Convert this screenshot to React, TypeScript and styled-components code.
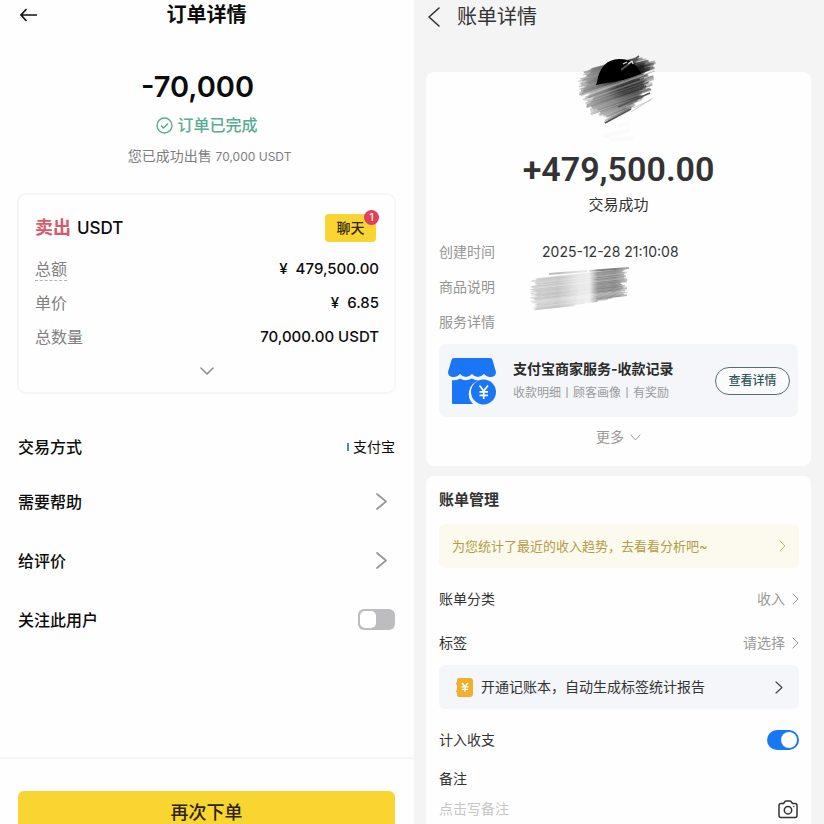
import React from 'react';
import styled, { createGlobalStyle, css } from 'styled-components';

const GlobalStyle = createGlobalStyle`
  *, *::before, *::after { box-sizing: border-box; }
  body {
    margin: 0;
    background: #f4f4f4;
    font-family: Inter, "Noto Sans CJK SC", sans-serif;
    -webkit-font-smoothing: antialiased;
  }
  button, input {
    font: inherit;
    color: inherit;
    margin: 0;
    padding: 0;
    border: 0;
    background: none;
  }
  button { cursor: pointer; }
  h1, h2, p, dl, dd, dt { margin: 0; font-weight: inherit; }
  svg { display: block; flex: none; }
`;

const Page = styled.div`
  display: grid;
  grid-template-columns: 101fr 100fr;
  height: 100vh;
  overflow: hidden;
`;

/* ---------- shared ---------- */

type Dir = 'left' | 'right' | 'down';

const chevronPoints = (dir: Dir, w: number, h: number) => {
  if (dir === 'left') return `${w - 1},1 1,${h / 2} ${w - 1},${h - 1}`;
  if (dir === 'right') return `1,1 ${w - 1},${h / 2} 1,${h - 1}`;
  return `1,1 ${w / 2},${h - 1} ${w - 1},1`;
};

const Chevron = ({
  dir = 'right',
  w,
  h,
  color,
  stroke = 1.3,
}: {
  dir?: Dir;
  w: number;
  h: number;
  color: string;
  stroke?: number;
}) => (
  <svg width={w} height={h} viewBox={`0 0 ${w} ${h}`} fill="none" aria-hidden="true">
    <polyline
      points={chevronPoints(dir, w, h)}
      stroke={color}
      strokeWidth={stroke}
      strokeLinecap="round"
      strokeLinejoin="round"
    />
  </svg>
);

const Switch = styled.input.attrs({ type: 'checkbox', role: 'switch' })<{ $kind: 'square' | 'round' }>`
  appearance: none;
  display: flex;
  flex: none;
  align-items: center;
  cursor: pointer;
  ${({ $kind }) =>
    $kind === 'square'
      ? css`
          width: 37px;
          height: 21px;
          padding: 2px;
          border-radius: 6px;
          background: #bdbdbf;
          &::before { width: 16px; height: 17px; border-radius: 5px; }
          &:checked { background: #f9d535; }
        `
      : css`
          width: 32px;
          height: 20px;
          padding: 2px;
          border-radius: 10px;
          background: #c9c9c9;
          &::before { width: 16px; height: 16px; border-radius: 8px; }
          &:checked { background: #1877f2; }
        `}
  &::before { content: ''; background: #fff; }
  &:checked { justify-content: flex-end; }
`;

/* ---------- order panel ---------- */

const OrderPanel = styled.main`
  display: flex;
  flex-direction: column;
  background: #fefefe;
  color: #0c0c0c;
`;

const OrderHeader = styled.header`
  display: grid;
  grid-template-columns: 20px 1fr 20px;
  align-items: center;
  height: 29px;
  padding: 0 19px 0 18px;
`;

const OrderTitle = styled.h1`
  font-size: 20px;
  line-height: 28px;
  font-weight: 600;
  text-align: center;
`;

const Summary = styled.section`
  display: flex;
  flex-direction: column;
  align-items: center;
  padding: 40px 19px 26px 18px;
`;

const OrderAmount = styled.p`
  padding-right: 18px;
  font-size: 29px;
  line-height: 36px;
  font-weight: 600;
`;

const OrderStatus = styled.p`
  display: flex;
  align-items: center;
  gap: 5px;
  margin-top: 10px;
  font-size: 16px;
  line-height: 20px;
  font-weight: 500;
  color: #58ac93;
`;

const OrderNote = styled.p`
  margin-top: 11px;
  padding-left: 6px;
  font-size: 14px;
  line-height: 20px;
  color: #7d7d7d;
`;

const NoteAmount = styled.span`
  font-size: 12px;
`;

const OrderCard = styled.section`
  margin: 0 18px 0 17px;
  padding: 15px 15px 4px 16px;
  border: 2px solid #f6f6f6;
  border-radius: 9px;
`;

const CardHead = styled.div`
  display: flex;
  align-items: center;
  justify-content: space-between;
  height: 36px;
  margin-bottom: 6px;
`;

const Pair = styled.h2`
  display: flex;
  align-items: center;
  gap: 6px;
  font-size: 17px;
  line-height: 24px;
  font-weight: 500;
`;

const Side = styled.span`
  font-size: 18px;
  font-weight: 700;
  color: #d9596a;
`;

const ChatButton = styled.button`
  position: relative;
  width: 51px;
  height: 28px;
  margin-right: 3px;
  border-radius: 4px;
  background: #f9d432;
  color: #2d2508;
  font-size: 14px;
  line-height: 28px;
  font-weight: 500;
`;

const Badge = styled.span`
  position: absolute;
  top: -4px;
  right: -3px;
  width: 15px;
  height: 15px;
  border-radius: 8px;
  background: #df405b;
  color: #fff;
  font-size: 10px;
  line-height: 15px;
  text-align: center;
`;

const Row = styled.div`
  display: flex;
  align-items: center;
  justify-content: space-between;
  height: 34px;
`;

const RowLabel = styled.dt<{ $dotted?: boolean }>`
  font-size: 16px;
  line-height: 22px;
  color: #7f7f7f;
  ${({ $dotted }) => $dotted && 'border-bottom: 1px dashed #b5b5b5;'}
`;

const RowValue = styled.dd`
  font-size: 15px;
  line-height: 22px;
  font-weight: 500;
  white-space: pre;
`;

const ExpandButton = styled.button`
  display: flex;
  align-items: center;
  justify-content: center;
  width: 100%;
  height: 34px;
`;

const OptionList = styled.div`
  display: flex;
  flex-direction: column;
  margin-top: 27px;
  padding: 0 19px 0 18px;
`;

const optionStyles = css`
  display: flex;
  align-items: center;
  justify-content: space-between;
  width: 100%;
  height: 59px;
  font-size: 16px;
  line-height: 22px;
  font-weight: 500;
  text-align: left;
`;

const OptionInfo = styled.div`
  ${optionStyles}
  height: 51px;
`;

const OptionButton = styled.button`
  ${optionStyles}
  padding-right: 8px;
`;

const OptionLabel = styled.label`
  ${optionStyles}
`;

const Method = styled.span`
  display: flex;
  align-items: center;
  gap: 4px;
  font-size: 14px;
  font-weight: 400;
  &::before {
    content: '';
    width: 2px;
    height: 8px;
    background: #3f8fd0;
  }
`;

const OrderFooter = styled.footer`
  margin-top: 108px;
  padding: 32px 19px 32px 18px;
  border-top: 2px solid #f5f5f5;
`;

const ReorderButton = styled.button`
  width: 100%;
  height: 44px;
  border-radius: 6px;
  background: #f9d532;
  color: #2c2408;
  font-size: 18px;
  line-height: 44px;
  font-weight: 500;
`;

/* ---------- bill panel ---------- */

const BillPanel = styled.main`
  display: flex;
  flex-direction: column;
  padding: 0 13px 0 12px;
  background: #f4f4f4;
  color: #333;
`;

const BillHeader = styled.header`
  display: flex;
  align-items: center;
  gap: 17px;
  height: 34px;
  margin-bottom: 38px;
  padding-left: 2px;
`;

const BillTitle = styled.h1`
  font-size: 20px;
  line-height: 28px;
`;

const Card = styled.section`
  display: flex;
  flex-direction: column;
  padding: 0 13px 9px;
  border-radius: 8px;
  background: #fefefe;
  & + & {
    margin-top: 10px;
    padding-right: 12px;
  }
`;

const Avatar = styled.div`
  align-self: center;
  height: 77px;
  & > svg { margin-top: -22px; }
`;

const BillAmount = styled.p`
  font-family: Roboto, sans-serif;
  font-size: 34px;
  line-height: 40px;
  font-weight: 600;
  text-align: center;
`;

const BillStatus = styled.p`
  margin: 6px 0 19px;
  font-size: 15px;
  line-height: 20px;
  text-align: center;
`;

const InfoRow = styled.div`
  display: flex;
  align-items: center;
  height: 35px;
  font-size: 14px;
  line-height: 20px;
`;

const InfoLabel = styled.dt`
  flex: none;
  width: 103px;
  color: #959595;
`;

const Smudge = styled.dd`
  height: 35px;
  margin-left: -15px;
  & > svg { margin-top: -3px; }
`;

const Promo = styled.div`
  display: flex;
  align-items: center;
  gap: 17px;
  height: 73px;
  margin-top: 5px;
  padding: 0 8px 0 9px;
  border-radius: 8px;
  background: #f4f6fa;
`;

const PromoText = styled.div`
  flex: 1;
  min-width: 0;
  white-space: nowrap;
`;

const PromoTitle = styled.p`
  font-size: 14px;
  line-height: 24px;
  font-weight: 700;
  color: #2b2b2b;
`;

const PromoSub = styled.p`
  font-size: 12px;
  line-height: 24px;
  color: #9a9a9a;
`;

const PillButton = styled.button`
  flex: none;
  width: 75px;
  height: 28px;
  border: 1px solid #5a6c70;
  border-radius: 14px;
  background: #f9fbfc;
  color: #34555a;
  font-size: 12px;
  line-height: 26px;
  font-weight: 500;
`;

const MoreButton = styled.button`
  display: flex;
  align-items: center;
  justify-content: center;
  gap: 6px;
  height: 40px;
  color: #999;
  font-size: 14px;
  line-height: 20px;
`;

const SectionTitle = styled.h2`
  height: 48px;
  font-size: 15px;
  line-height: 48px;
  font-weight: 700;
`;

const Banner = styled.button<{ $tone: 'gold' | 'blue' }>`
  display: flex;
  align-items: center;
  gap: 8px;
  height: 44px;
  margin-bottom: 9px;
  line-height: 20px;
  border-radius: 6px;
  text-align: left;
  white-space: nowrap;
  ${({ $tone }) =>
    $tone === 'gold'
      ? css`
          padding: 0 13px;
          background: #fcf9ee;
          color: #b59b45;
          font-size: 13px;
        `
      : css`
          padding: 0 16px 0 17px;
          background: #f4f6fa;
          color: #333;
          font-size: 14px;
        `}
`;

const Grow = styled.span`
  flex: 1;
`;

const settingStyles = css`
  display: flex;
  align-items: center;
  justify-content: space-between;
  height: 44px;
  font-size: 14px;
  line-height: 20px;
`;

const SettingButton = styled.button`
  ${settingStyles}
`;

const SettingLabel = styled.label`
  ${settingStyles}
`;

const SettingValue = styled.span`
  display: flex;
  align-items: center;
  gap: 7px;
  color: #999;
`;

const NoteLabel = styled.label`
  margin-top: 7px;
  font-size: 14px;
  line-height: 20px;
`;

const NoteRow = styled.div`
  display: flex;
  align-items: center;
  justify-content: space-between;
  height: 40px;
  padding-right: 1px;
`;

const NoteInput = styled.input`
  flex: 1;
  min-width: 0;
  font-size: 14px;
  line-height: 20px;
  outline: none;
  &::placeholder { color: #c6c6c6; opacity: 1; }
`;

/* ---------- drawings ---------- */

const noise = (n: number) => {
  const v = Math.sin(n * 127.1 + 11.7) * 43758.5453;
  return v - Math.floor(v);
};

const lerpTable = (table: number[][], y: number, col: number) => {
  for (let i = 1; i < table.length; i++) {
    if (y <= table[i][0]) {
      const a = table[i - 1];
      const b = table[i];
      const t = (y - a[0]) / (b[0] - a[0]);
      return a[col] + (b[col] - a[col]) * t;
    }
  }
  return table[table.length - 1][col];
};

// rows: start y, start x, end x, end y
const avatarEdges = [
  [21, 15, 68, 7],
  [29, 8, 88, 10],
  [45, 9, 86, 18],
  [54, 16, 85, 30],
  [63, 19, 82, 42],
  [74, 34, 66, 56],
];

const AvatarScribble = () => (
  <svg width="100" height="98" viewBox="0 0 100 98" fill="none" role="img" aria-label="头像">
    <defs>
      <radialGradient id="ink" gradientUnits="userSpaceOnUse" cx="61" cy="27" r="48">
        <stop offset="0" stopColor="#000" />
        <stop offset="0.35" stopColor="#1c1c1c" />
        <stop offset="0.6" stopColor="#606060" />
        <stop offset="1" stopColor="#8c8c8c" />
      </radialGradient>
      <filter id="soft"><feGaussianBlur stdDeviation="0.6" /></filter>
    </defs>
    <g filter="url(#soft)">
      {Array.from({ length: 100 }, (_, i) => {
        const y = 21 + (i / 99) * 53;
        const left = lerpTable(avatarEdges, y, 1);
        const right = lerpTable(avatarEdges, y, 2);
        const slope = (lerpTable(avatarEdges, y, 3) - y) / (right - left);
        const x1 = left + noise(i) * 11;
        const x2 = right - noise(i + 200) * 15;
        return (
          <line
            key={i}
            x1={x1}
            y1={y + slope * (x1 - left)}
            x2={x2}
            y2={y + slope * (x2 - left)}
            stroke="url(#ink)"
            strokeWidth={0.9 + noise(i + 90) * 1.5}
            opacity={0.25 + noise(i + 50) * 0.4}
          />
        );
      })}
      <path d="M28 32C30 18 38 9 50 9C61 9 69 15 72 24L54 30L27 35Z" fill="#050505" />
      <path d="M49 57L81 43M36 73L62 59M52 20L70 6" stroke="#555" strokeWidth="1.6" />
      <path d="M54 14l4-2M59 14l4-3M63 11l1 3" stroke="#ddd" strokeWidth="1.2" />
      <path d="M62 62L84 48M64 58L82 50" stroke="#ccc" strokeWidth="1" />
      <path d="M34 86L62 80M40 90L64 88M48 76L60 73" stroke="#fafafa" strokeWidth="4" />
    </g>
  </svg>
);

const SmudgeScribble = () => (
  <svg width="104" height="50" viewBox="0 0 104 50" fill="none" role="img" aria-label="已遮盖">
    <defs>
      <linearGradient id="smear" gradientUnits="userSpaceOnUse" x1="0" y1="0" x2="104" y2="0">
        <stop offset="0" stopColor="#c8c8c8" />
        <stop offset="0.3" stopColor="#bcbcbc" />
        <stop offset="0.5" stopColor="#e4e4e4" />
        <stop offset="0.6" stopColor="#e8e8e8" />
        <stop offset="0.68" stopColor="#858585" />
        <stop offset="0.85" stopColor="#7c7c7c" />
        <stop offset="1" stopColor="#bbb" />
      </linearGradient>
      <filter id="soft2"><feGaussianBlur stdDeviation="0.6" /></filter>
    </defs>
    <g filter="url(#soft2)">
      {Array.from({ length: 40 }, (_, i) => {
        const y = 14 + i * 0.78;
        const x1 = 2 + noise(i + 7) * 8 + (i > 30 ? 4 : 0);
        const x2 = 101 - noise(i + 31) * 8 - (i > 34 ? (i - 34) * 10 : 0);
        return (
          <line
            key={i}
            x1={x1}
            y1={y - x1 * 0.11}
            x2={x2}
            y2={y - x2 * 0.11}
            stroke="url(#smear)"
            strokeWidth={0.8 + noise(i + 12)}
            opacity={0.4 + noise(i + 70) * 0.5}
          />
        );
      })}
      <path d="M22 8L60 5M62 5L102 2" stroke="url(#smear)" strokeWidth="2" />
    </g>
  </svg>
);

const BackArrow = () => (
  <svg width="20" height="14" viewBox="0 0 20 14" fill="none" aria-hidden="true">
    <path d="M8.5 1L3 7L8.500 13M3 7H19" stroke="#111" strokeWidth="1.7" />
  </svg>
);

const CheckCircle = () => (
  <svg width="17" height="17" viewBox="0 0 17 17" fill="none" stroke="#58ac93" aria-hidden="true">
    <circle cx="8.500" cy="8.500" r="7.500" strokeWidth="1.400" />
    <path d="M5 8.600L7.600 11L12 6.400" strokeWidth="1.500" />
  </svg>
);

const ShopIcon = () => (
  <svg width="48" height="48" viewBox="0 0 48 48" fill="none" aria-hidden="true">
    <path
      d="M6 1H42Q44 1 44.500 3L48 15Q48 20 42.500 20Q38.500 20 36 17Q33 20 30 20Q26.500 20 24 17Q21 20 18 20Q14.500 20 12 17Q9.500 20 5.500 20Q0 20 0 15L3.500 3Q4 1 6 1Z"
      fill="#1b76f5"
    />
    <path
      d="M4 23Q9 24 12 21.500Q17 25 24 21.500Q28 24 31 23.500A14 14 0 0 0 25 47H5Q4 47 4 46Z"
      fill="#1b76f5"
    />
    <circle cx="35.500" cy="35" r="12.500" fill="#1b76f5" />
    <path d="M31.500 28.500L35.700 34L40 28.500M35.700 34V42M31.500 34.800H40M31.500 38.300H40" stroke="#fff" strokeWidth="1.700" />
  </svg>
);

const LedgerIcon = () => (
  <svg width="17" height="19" viewBox="0 0 17 19" fill="none" aria-hidden="true">
    <path
      d="M3 0H14Q17 0 17 3V16Q17 19 14 19H3Q1 19 1 17V14.500H0V12.500H1V6.500H0V4.500H1V2Q1 0 3 0Z"
      fill="#efb02e"
    />
    <path d="M6 5L9 8.500L12 5M9 8.500V13.500M5.500 8.800H12.500M6 11.300H12" stroke="#fff" strokeWidth="1.300" />
  </svg>
);

const CameraIcon = () => (
  <svg width="20" height="19" viewBox="0 0 20 19" fill="none" stroke="#333" aria-hidden="true">
    <path
      d="M3 3.500H5.500L7 1.500Q7.400 1 8 1H12Q12.600 1 13 1.500L14.500 3.500H17Q19 3.500 19 5.500V15.500Q19 17.500 17 17.500H3Q1 17.500 1 15.500V5.500Q1 3.500 3 3.500Z"
      strokeWidth="1.500"
      strokeLinejoin="round"
    />
    <circle cx="10" cy="10.200" r="3.700" strokeWidth="1.500" />
    <circle cx="15.800" cy="6.400" r="0.500" fill="#333" strokeWidth="0.500" />
  </svg>
);

/* ---------- page ---------- */

const orderRows = [
  { label: '总额', value: '¥  479,500.00', dotted: true },
  { label: '单价', value: '¥  6.85' },
  { label: '总数量', value: '70,000.00 USDT' },
];

export default function App() {
  return (
    <>
      <GlobalStyle />
      <Page>
        <OrderPanel>
          <OrderHeader>
            <button type="button" aria-label="返回"><BackArrow /></button>
            <OrderTitle>订单详情</OrderTitle>
          </OrderHeader>
          <Summary>
            <OrderAmount>-70,000</OrderAmount>
            <OrderStatus><CheckCircle />订单已完成</OrderStatus>
            <OrderNote>您已成功出售 <NoteAmount>70,000 USDT</NoteAmount></OrderNote>
          </Summary>
          <OrderCard>
            <CardHead>
              <Pair><Side>卖出</Side>USDT</Pair>
              <ChatButton type="button">聊天<Badge>1</Badge></ChatButton>
            </CardHead>
            <dl>
              {orderRows.map((r) => (
                <Row key={r.label}>
                  <RowLabel $dotted={r.dotted}>{r.label}</RowLabel>
                  <RowValue>{r.value}</RowValue>
                </Row>
              ))}
            </dl>
            <ExpandButton type="button" aria-label="展开">
              <Chevron dir="down" w={14} h={8} color="#8f8f8f" stroke={1.6} />
            </ExpandButton>
          </OrderCard>
          <OptionList>
            <OptionInfo>交易方式<Method>支付宝</Method></OptionInfo>
            <OptionButton type="button">需要帮助<Chevron w={11} h={17} color="#969696" stroke={1.7} /></OptionButton>
            <OptionButton type="button">给评价<Chevron w={11} h={17} color="#969696" stroke={1.7} /></OptionButton>
            <OptionLabel>关注此用户<Switch $kind="square" /></OptionLabel>
          </OptionList>
          <OrderFooter>
            <ReorderButton type="button">再次下单</ReorderButton>
          </OrderFooter>
        </OrderPanel>

        <BillPanel>
          <BillHeader>
            <button type="button" aria-label="返回">
              <Chevron dir="left" w={12} h={20} color="#333" stroke={1.6} />
            </button>
            <BillTitle>账单详情</BillTitle>
          </BillHeader>
          <Card>
            <Avatar><AvatarScribble /></Avatar>
            <BillAmount>+479,500.00</BillAmount>
            <BillStatus>交易成功</BillStatus>
            <dl>
              <InfoRow><InfoLabel>创建时间</InfoLabel><dd>2025-12-28 21:10:08</dd></InfoRow>
              <InfoRow><InfoLabel>商品说明</InfoLabel><Smudge><SmudgeScribble /></Smudge></InfoRow>
              <InfoRow><InfoLabel>服务详情</InfoLabel></InfoRow>
            </dl>
            <Promo>
              <ShopIcon />
              <PromoText>
                <PromoTitle>支付宝商家服务-收款记录</PromoTitle>
                <PromoSub>收款明细丨顾客画像丨有奖励</PromoSub>
              </PromoText>
              <PillButton type="button">查看详情</PillButton>
            </Promo>
            <MoreButton type="button">
              更多<Chevron dir="down" w={11} h={7} color="#999" stroke={1} />
            </MoreButton>
          </Card>
          <Card>
            <SectionTitle>账单管理</SectionTitle>
            <Banner type="button" $tone="gold">
              <Grow>为您统计了最近的收入趋势，去看看分析吧~</Grow>
              <Chevron w={7} h={12} color="#c5b272" stroke={1} />
            </Banner>
            <SettingButton type="button">
              账单分类<SettingValue>收入<Chevron w={7} h={12} color="#999" stroke={1} /></SettingValue>
            </SettingButton>
            <SettingButton type="button">
              标签<SettingValue>请选择<Chevron w={7} h={12} color="#999" stroke={1} /></SettingValue>
            </SettingButton>
            <Banner type="button" $tone="blue">
              <LedgerIcon />
              <Grow>开通记账本，自动生成标签统计报告</Grow>
              <Chevron w={8} h={13} color="#444" stroke={1.2} />
            </Banner>
            <SettingLabel>计入收支<Switch $kind="round" defaultChecked /></SettingLabel>
            <NoteLabel htmlFor="note">备注</NoteLabel>
            <NoteRow>
              <NoteInput id="note" placeholder="点击写备注" />
              <button type="button" aria-label="添加图片"><CameraIcon /></button>
            </NoteRow>
          </Card>
        </BillPanel>
      </Page>
    </>
  );
}
